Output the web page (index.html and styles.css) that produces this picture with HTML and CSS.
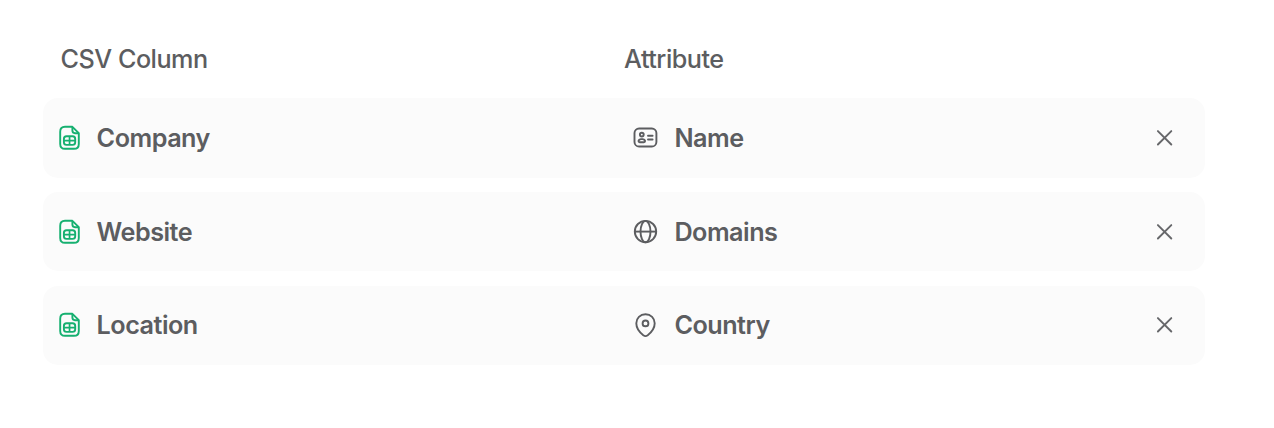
FILE: index.html
```html
<!DOCTYPE html>
<html lang="en">
<head>
<meta charset="utf-8">
<title>Column mapping</title>
<link rel="stylesheet" href="styles.css">
</head>
<body>
<svg class="defs" width="0" height="0" aria-hidden="true">
  <symbol id="sheet" viewBox="0.2 0.1 28 28">
    <path d="M9.2 2.9H16.6L23 9.3V20Q23 24.9 18.1 24.9H9.2Q4.4 24.9 4.4 20V7.8Q4.4 2.9 9.2 2.9Z"/>
    <path d="M16.6 3V6.7Q16.6 9.3 19.2 9.3H23"/>
    <rect x="8.1" y="12.4" width="11.3" height="8.6" rx="2.6"/>
    <path d="M8.1 16.7H19.4M13.75 12.4V21" stroke-width="1.7"/>
  </symbol>
  <symbol id="card" viewBox="-0.6 0.3 28 28">
    <rect x="2.9" y="4.8" width="21.9" height="18" rx="4.6"/>
    <circle cx="10.2" cy="10.9" r="1.9"/>
    <path d="M9.3 15.4H11.1Q13.2 15.7 13.5 17.3Q13.5 18.5 12.3 18.5H8.1Q6.9 18.5 6.9 17.3Q7.2 15.7 9.3 15.4Z"/>
    <path d="M16.4 12.1H21M16.4 15.8H21" stroke-linecap="round"/>
  </symbol>
  <symbol id="globe" viewBox="-0.5 0.4 28 28">
    <circle cx="14" cy="14" r="10.7"/>
    <ellipse cx="14" cy="14" rx="5" ry="10.7"/>
    <path d="M3.3 14H24.7"/>
  </symbol>
  <symbol id="pin" viewBox="-0.5 -0.2 28 28">
    <path d="M14 3.1C19.3 3.1 23.2 6.9 23.2 12.1C23.2 17.4 19.6 21.4 16.2 24.1Q14 25.7 11.8 24.1C8.4 21.4 4.8 17.4 4.8 12.1C4.8 6.9 8.7 3.1 14 3.1Z"/>
    <circle cx="14" cy="12.2" r="2.9"/>
  </symbol>
  <symbol id="close" viewBox="0.4 0.2 28 28">
    <path d="M7.3 7.3L20.7 20.7M20.7 7.3L7.3 20.7" stroke-linecap="round"/>
  </symbol>
</svg>
<main class="mapping">
  <header class="head"><span class="head-source">CSV Column</span><span>Attribute</span></header>
  <div class="rows">
    <div class="row">
      <div class="source"><svg class="icon green"><use href="#sheet"/></svg><span>Company</span></div>
      <div class="target"><svg class="icon"><use href="#card"/></svg><span>Name</span></div>
      <button class="remove" aria-label="Remove Name"><svg class="icon"><use href="#close"/></svg></button>
    </div>
    <div class="row">
      <div class="source"><svg class="icon green"><use href="#sheet"/></svg><span>Website</span></div>
      <div class="target"><svg class="icon"><use href="#globe"/></svg><span>Domains</span></div>
      <button class="remove" aria-label="Remove Domains"><svg class="icon"><use href="#close"/></svg></button>
    </div>
    <div class="row">
      <div class="source"><svg class="icon green"><use href="#sheet"/></svg><span>Location</span></div>
      <div class="target"><svg class="icon"><use href="#pin"/></svg><span>Country</span></div>
      <button class="remove" aria-label="Remove Country"><svg class="icon"><use href="#close"/></svg></button>
    </div>
  </div>
</main>
</body>
</html>
```
FILE: styles.css
```css
* { box-sizing: border-box; }
body {
  margin: 0;
  background: #fff;
  color: #5c5d60;
  font: 600 25.2px/32px Inter, "Liberation Sans", sans-serif;
}
.defs { display: block; }
.mapping { width: 1162px; margin-left: 43px; padding-top: 43.1px; }
.head { display: flex; padding-left: 17.6px; font-weight: 450; letter-spacing: -0.5px; }
.head-source { width: 563.5px; }
.rows { display: grid; gap: 14.3px; margin-top: 23px; }
.row {
  display: flex;
  align-items: center;
  height: 79.5px;
  padding: 0 26.5px 0 12.6px;
  border-radius: 15px;
  background: #fbfbfb;
  letter-spacing: -0.5px;
}
.source, .target { display: flex; align-items: center; }
.source { width: 575.5px; gap: 13px; }
.target { flex: 1; gap: 15.3px; }
.icon {
  display: block;
  width: 28px;
  height: 28px;
  fill: none;
  stroke: currentColor;
  stroke-width: 1.9;
  stroke-linejoin: round;
}
.green { color: #16b070; }
.remove { padding: 0; border: 0; background: none; color: #66676a; }
```
